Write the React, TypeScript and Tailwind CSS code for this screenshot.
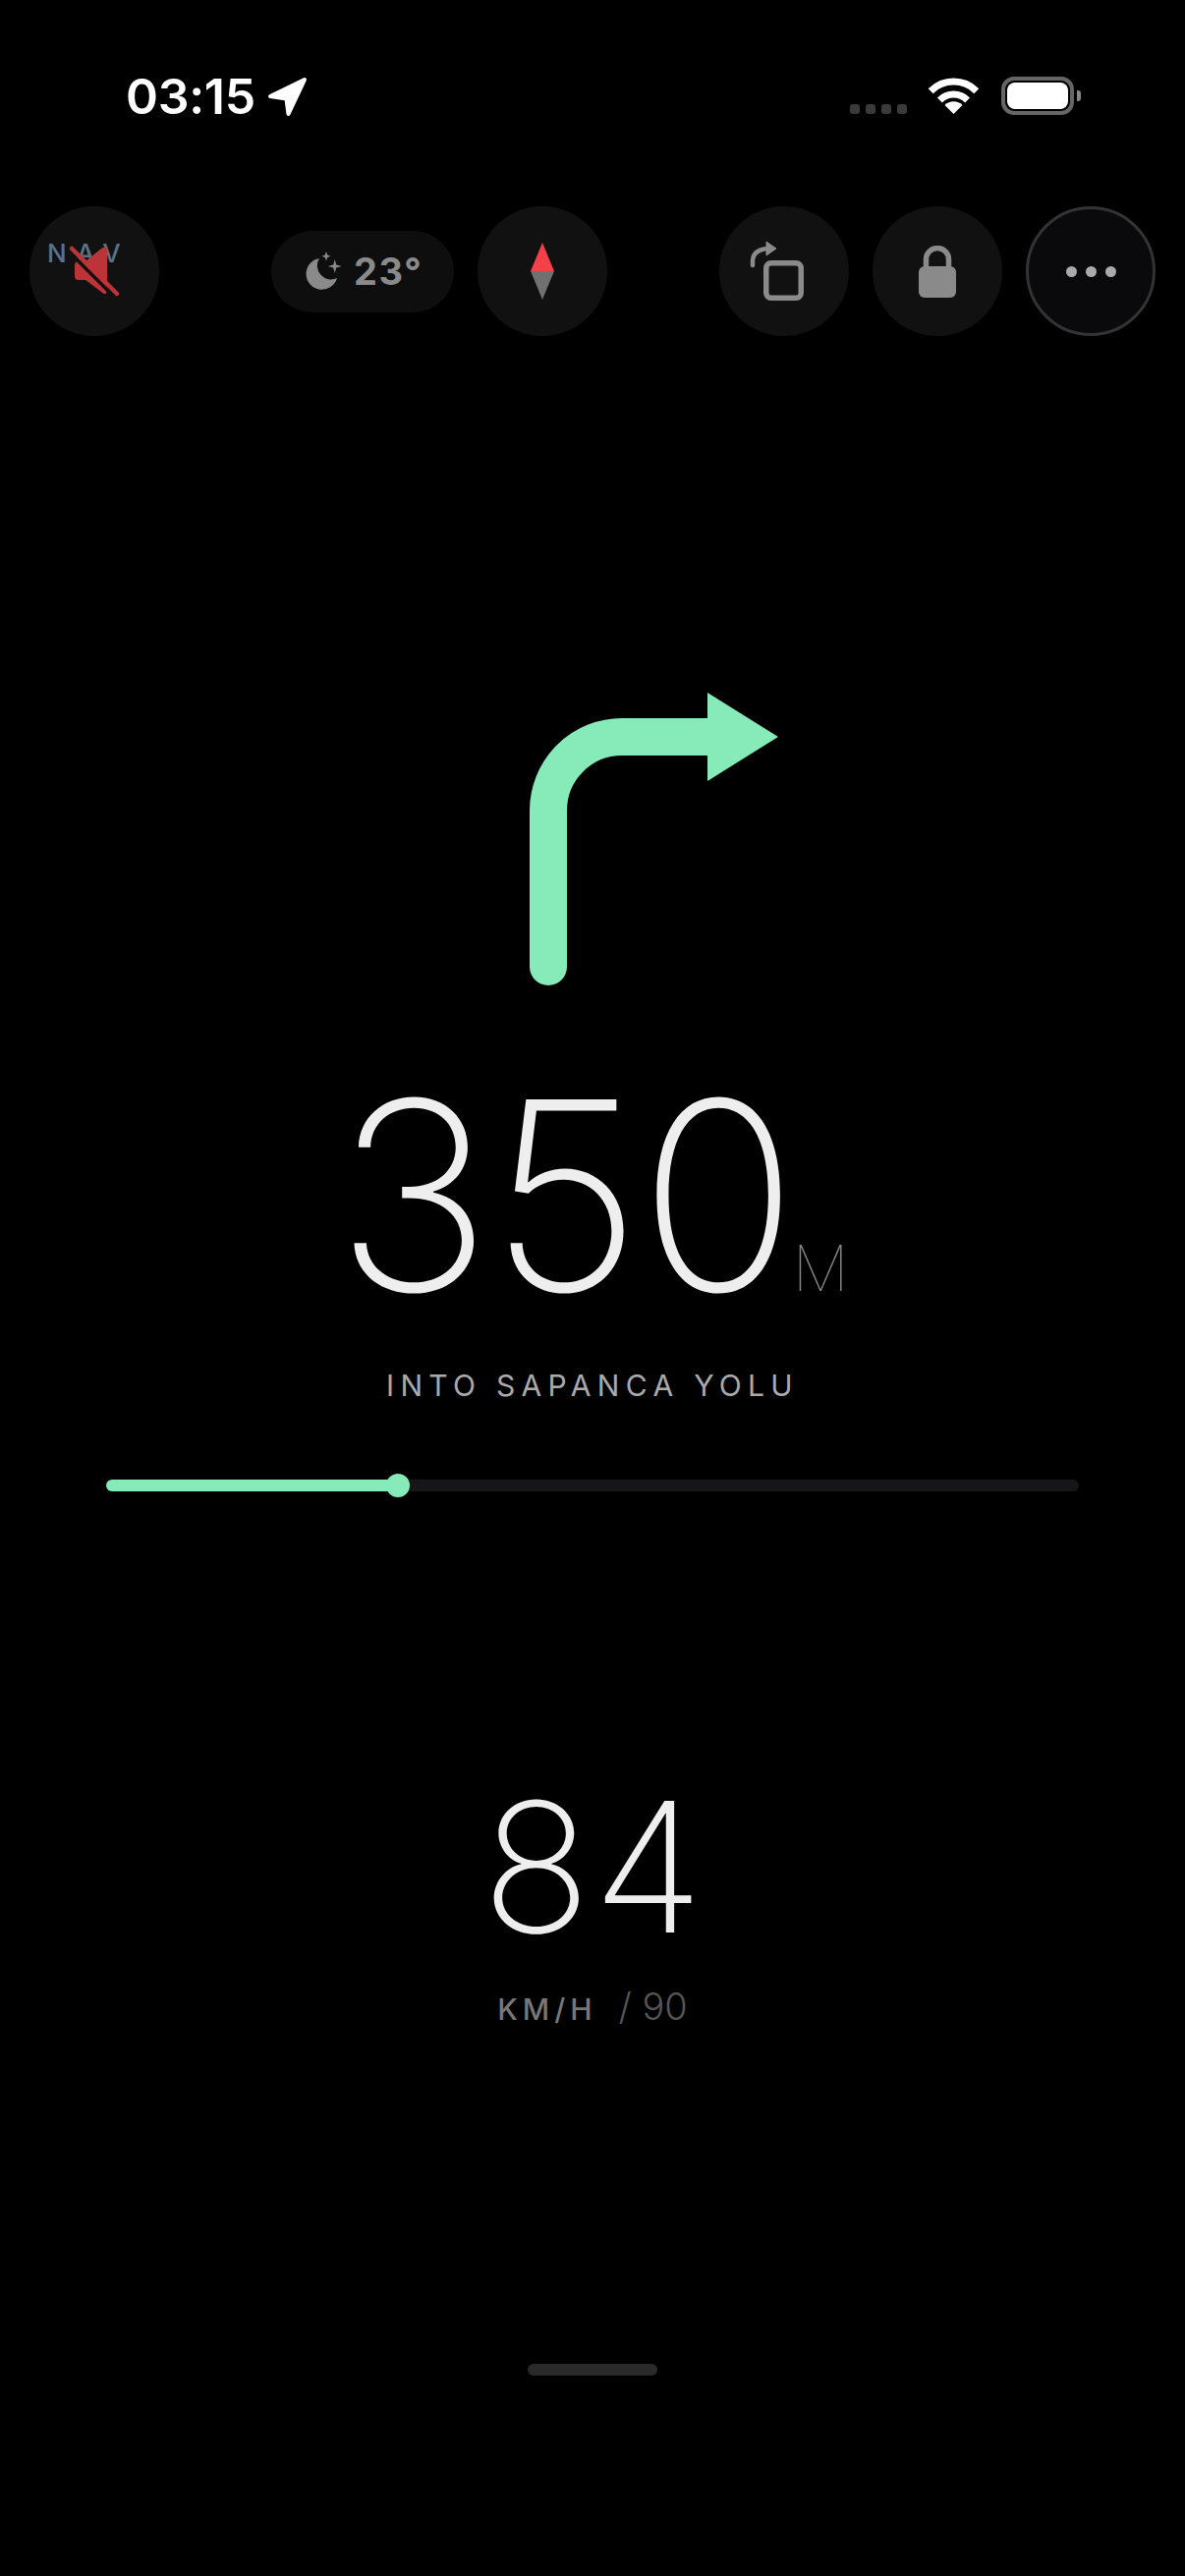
import React from 'react';

const font = { fontFamily: 'Inter, sans-serif' };

const RoundButton: React.FC<{ children: React.ReactNode; outlined?: boolean }> = ({ children, outlined }) => (
  <div
    className={`relative flex h-[132px] w-[132px] shrink-0 items-center justify-center rounded-full ${
      outlined ? 'border-[3px] border-[#333335] bg-[#0a0a0c]' : 'bg-[#111111]'
    }`}
  >
    {children}
  </div>
);

const StatusBar: React.FC = () => (
  <div className="flex h-[210px] items-start justify-between pl-[128px] pr-[106px] pt-[70px]">
    <div className="flex items-center gap-[12px]">
      <span className="text-[50px] font-semibold leading-[56px] tracking-[-0.3px] text-white">03:15</span>
      <svg width="41" height="41" viewBox="0 0 40 40">
        <path d="M37 3 L3 19.5 L19 22 L21 37 Z" fill="#fff" stroke="#fff" strokeWidth="4" strokeLinejoin="round" />
      </svg>
    </div>
    <div className="flex items-start pt-[8px]">
      <div className="mt-[28px] flex gap-[6px]">
        <div className="h-[10px] w-[10px] rounded-[3px] bg-[#3a3a3a]" />
        <div className="h-[10px] w-[10px] rounded-[3px] bg-[#3a3a3a]" />
        <div className="h-[10px] w-[10px] rounded-[3px] bg-[#3a3a3a]" />
        <div className="h-[10px] w-[10px] rounded-[3px] bg-[#3a3a3a]" />
      </div>
      <svg className="ml-[22px] mt-[1px]" width="51" height="37" viewBox="0 0 51 37">
        <path d="M2.2 13.7 A33 33 0 0 1 48.8 13.7" fill="none" stroke="#fff" strokeWidth="7" />
        <path d="M11.4 22.9 A20 20 0 0 1 39.6 22.9" fill="none" stroke="#fff" strokeWidth="7" />
        <path d="M25.5 37 L16.5 28 A12.7 12.7 0 0 1 34.5 28 Z" fill="#fff" />
      </svg>
      <div className="ml-[23px] flex items-center">
        <div className="h-[39px] w-[74px] rounded-[13px] border-[4px] border-[#666666] p-[2px]">
          <div className="h-full w-full rounded-[8px] bg-white" />
        </div>
        <div className="ml-[3px] h-[11px] w-[4px] rounded-r-[3px] bg-[#888888]" />
      </div>
    </div>
  </div>
);

const TopControls: React.FC = () => (
  <div className="flex items-center justify-between px-[30px]">
    <RoundButton>
      <span className="absolute left-[18px] top-[33px] text-[26px] font-medium leading-[30px] tracking-[10px] text-[#5b7189]">
        NAV
      </span>
      <svg className="absolute left-0 top-0" width="132" height="132" viewBox="0 0 132 132">
        <path
          d="M46 60 Q46 56 50 56 L57 56 L73 43 Q79 39 79 45 L79 79 L78 89 Q76 90 73 87 L57 75 L50 75 Q46 75 46 71 Z"
          fill="#bb3438"
        />
        <line x1="38" y1="44" x2="84" y2="90" stroke="#111111" strokeWidth="3.5" />
        <line x1="43" y1="43" x2="89" y2="89" stroke="#bb3438" strokeWidth="4.5" strokeLinecap="round" />
      </svg>
    </RoundButton>
    <div className="flex items-center gap-[24px]">
      <div className="flex h-[83px] w-[186px] items-center gap-[12px] rounded-full bg-[#0e0e0e] pl-[34px]">
        <svg width="38" height="40" viewBox="0 0 38 40">
          <path d="M15 7 A16 16 0 1 0 33 27 A14 14 0 0 1 15 7 Z" fill="#8a8a8a" />
          <path d="M22 0 L23.2 3.5 L26.5 4.7 L23.2 5.9 L22 9.4 L20.8 5.9 L17.5 4.7 L20.8 3.5 Z" fill="#8a8a8a" />
          <path d="M30.7 8 L32.2 13.5 L37.7 15 L32.2 16.5 L30.7 22 L29.2 16.5 L23.7 15 L29.2 13.5 Z" fill="#8a8a8a" />
        </svg>
        <span className="text-[38px] font-bold leading-none tracking-[1.5px] text-[#8a8a8a]">23°</span>
      </div>
      <RoundButton>
        <svg width="24" height="58" viewBox="0 0 24 58">
          <path d="M12 0 L24 29 L0 29 Z" fill="#f5404a" />
          <path d="M0 29 L24 29 L12 58 Z" fill="#707070" />
        </svg>
      </RoundButton>
    </div>
    <div className="flex items-center gap-[24px]">
      <RoundButton>
        <svg className="absolute left-0 top-0" width="132" height="132" viewBox="0 0 132 132">
          <rect x="47.75" y="57.75" width="35.5" height="35.5" rx="5" fill="none" stroke="#8a8a8a" strokeWidth="5.5" />
          <path d="M34 60 L34 56 Q34 44 50 43" fill="none" stroke="#8a8a8a" strokeWidth="4.5" strokeLinecap="round" />
          <path d="M48 36 L58 43 L48 50 Z" fill="#8a8a8a" stroke="#8a8a8a" strokeWidth="1" strokeLinejoin="round" />
        </svg>
      </RoundButton>
      <RoundButton>
        <svg width="38" height="53" viewBox="0 0 38 53">
          <path d="M7.5 24 V14 A11.5 11.5 0 0 1 30.5 14 V24" fill="none" stroke="#8a8a8a" strokeWidth="5.5" />
          <rect x="0" y="21" width="38" height="32" rx="6" fill="#8a8a8a" />
        </svg>
      </RoundButton>
      <RoundButton outlined>
        <div className="flex gap-[9px]">
          <div className="h-[11px] w-[11px] rounded-full bg-[#aaaaaa]" />
          <div className="h-[11px] w-[11px] rounded-full bg-[#aaaaaa]" />
          <div className="h-[11px] w-[11px] rounded-full bg-[#aaaaaa]" />
        </div>
      </RoundButton>
    </div>
  </div>
);

export default function App() {
  return (
    <div className="flex min-h-[2622px] w-[1206px] flex-col bg-black" style={font}>
      <StatusBar />
      <TopControls />

      {/* Turn arrow */}
      <svg className="ml-[539px] mt-[363px] shrink-0" width="254" height="298" viewBox="0 0 254 298">
        <path d="M19 279 V120 A75 75 0 0 1 94 45 H190" fill="none" stroke="#86ebb8" strokeWidth="38" strokeLinecap="round" />
        <path d="M181 0 L253 45 L181 90 Z" fill="#86ebb8" />
      </svg>

      {/* Distance */}
      <div className="mt-[99px] flex h-[230px] items-baseline justify-center pr-[1px]">
        <span className="text-[268px] font-extralight leading-[230px] tracking-[-2.5px] text-[#eeeeee]">350</span>
        <span className="ml-[-3px] text-[64px] font-thin leading-none text-[#888888]">M</span>
      </div>
      <div className="mt-[60px] text-center text-[30px] font-normal leading-[36px] tracking-[6.3px] text-[#aaaaaa]">
        INTO SAPANCA YOLU
      </div>

      {/* Progress */}
      <div className="relative mx-[108px] mt-[78px] h-[12px] rounded-full bg-[#161618]">
        <div className="h-full w-[30%] rounded-full bg-[#86ebb8]" />
        <div className="absolute left-[285px] top-[-6px] h-[24px] w-[24px] rounded-full bg-[#86ebb8]" />
      </div>

      {/* Speed */}
      <div className="mt-[302px] pl-[2px] text-center text-[184px] font-extralight leading-[160px] tracking-[2px] text-[#eeeeee]">
        84
      </div>
      <div className="mt-[43px] flex items-baseline justify-center gap-[22px]">
        <span className="text-[30px] font-medium leading-none tracking-[5px] text-[#777777]">KM/H</span>
        <span className="text-[38px] font-light leading-none text-[#555555]">/ 90</span>
      </div>

      {/* Home indicator */}
      <div className="mx-auto mt-[345px] h-[12px] w-[132px] rounded-full bg-[#2a2a2a]" />
    </div>
  );
}
